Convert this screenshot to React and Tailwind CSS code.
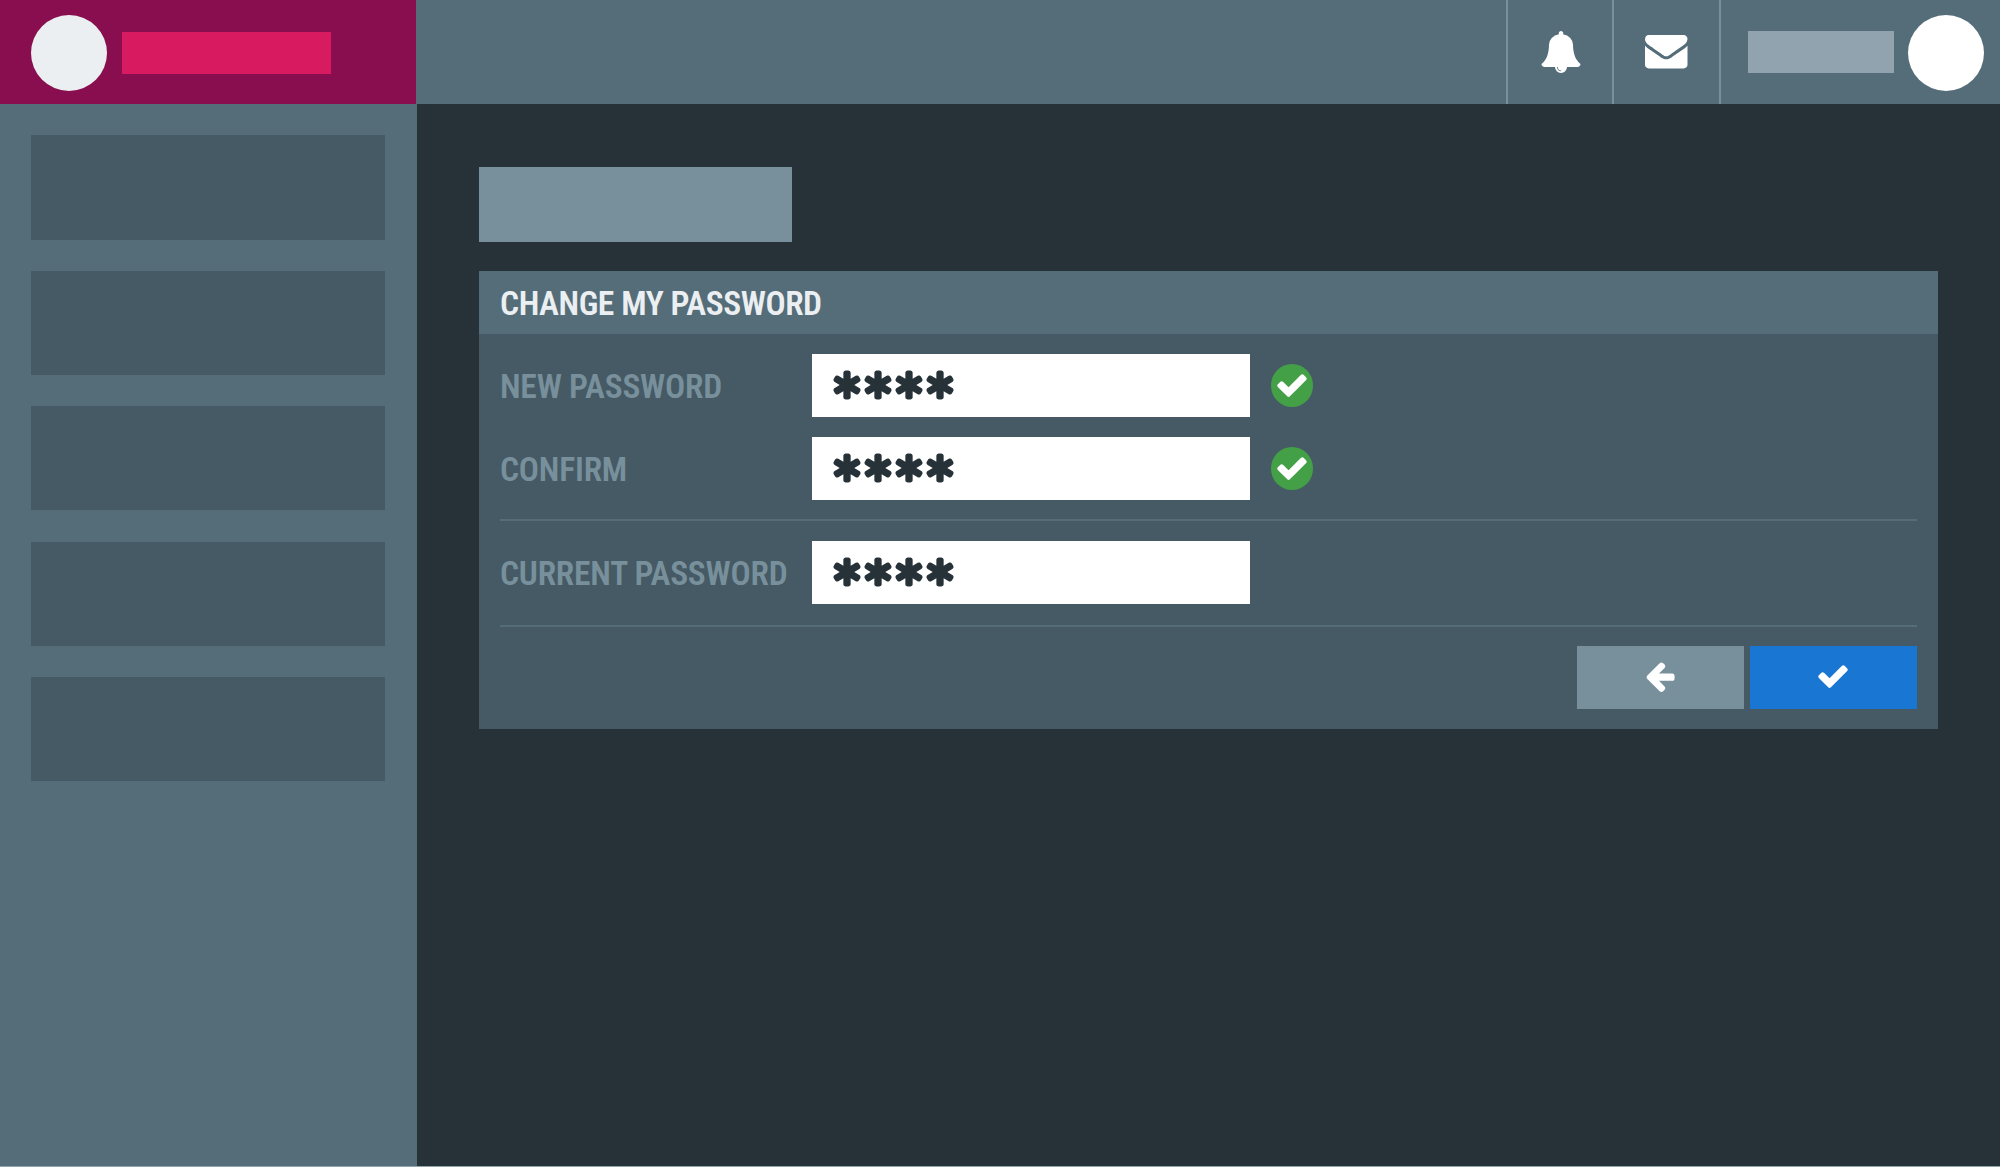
const ICONS = {
  check:
    'M1671 566q0 40-28 68l-724 724-136 136q-28 28-68 28t-68-28l-136-136-362-362q-28-28-28-68t28-68l136-136q28-28 68-28t68 28l294 295 656-657q28-28 68-28t68 28l136 136q28 28 28 68z',
  back:
    'M1664 896v128q0 53-32.5 90.5t-84.5 37.5h-704l293 294q38 36 38 90t-38 90l-75 76q-37 37-90 37-52 0-91-37l-651-652q-37-37-37-90 0-52 37-91l651-650q38-38 91-38 52 0 90 38l75 74q38 38 38 91t-38 91l-293 293h704q52 0 84.5 37.5t32.5 90.5z',
  asterisk:
    'M1546 1050q46 26 59.5 77.5t-12.5 97.5l-64 110q-26 46-77.5 59.5t-97.5-12.5l-266-153v307q0 52-38 90t-90 38h-128q-52 0-90-38t-38-90v-307l-266 153q-46 26-97.5 12.5t-77.5-59.5l-64-110q-26-46-12.5-97.5t59.5-77.5l266-154-266-154q-46-26-59.5-77.5t12.5-97.5l64-110q26-46 77.5-59.5t97.5 12.5l266 153v-307q0-52 38-90t90-38h128q52 0 90 38t38 90v307l266-153q46-26 97.5-12.5t77.5 59.5l64 110q26 46 12.5 97.5t-59.5 77.5l-266 154z',
  bell:
    'M912 1696q0-16-16-16-59 0-101.5-42.5t-42.5-101.5q0-16-16-16t-16 16q0 73 51.5 124.5t124.5 51.5q16 0 16-16zm816-288q0 52-38 90t-90 38h-448q0 106-75 181t-181 75-181-75-75-181h-448q-52 0-90-38t-38-90q50-42 91-88t85-119.5 74.5-158.5 50-206 19.5-260q0-152 117-282.5t307-158.5q-8-19-8-39 0-40 28-68t68-28 68 28 28 68q0 20-8 39 190 28 307 158.5t117 282.5q0 139 19.5 260t50 206 74.5 158.5 85 119.5 91 88z',
  envelope:
    'M1792 710v794q0 66-47 113t-113 47h-1472q-66 0-113-47t-47-113v-794q44 49 101 87 362 246 497 345 57 42 92.5 65.5t94.5 48 110 24.5h2q51 0 110-24.5t94.5-48 92.5-65.5q170-123 498-345 57-39 100-87zm0-294q0 79-49 151t-122 123q-376 261-468 325-10 7-42.5 31t-54 38.5-52 32.5-57.5 27-50 9h-2q-23 0-50-9t-57.5-27-52-32.5-54-38.5-42.5-31q-91-64-262-182.5t-205-142.5q-62-42-117-115.5t-55-136.5q0-78 41.5-130t118.5-52h1472q65 0 112.5 47t47.5 113z',
};

function Icon({ name, className }) {
  return (
    <svg viewBox="0 0 1792 1792" fill="currentColor" className={`shrink-0 overflow-visible ${className}`}>
      <path d={ICONS[name]} />
    </svg>
  );
}

function Caption({ children, className }) {
  return (
    <span className={`block pt-[2px] text-[33.5px] leading-none font-semibold whitespace-nowrap [font-stretch:75%] ${className}`}>
      {children}
    </span>
  );
}

function Field({ label, valid, className = '' }) {
  return (
    <div className={`flex h-[63px] items-center ${className}`}>
      <div className="w-[312px] shrink-0">
        <Caption className="tracking-[-0.22px] text-[#78909c]">{label}</Caption>
      </div>
      <div className="flex h-full w-[438px] shrink-0 items-center bg-white pl-[17.5px] text-[#263238]">
        {[0, 1, 2, 3].map((i) => (
          <span key={i} className="flex w-[31px]">
            <Icon name="asterisk" className="size-[34px]" />
          </span>
        ))}
      </div>
      {valid && (
        <div className="ml-[20.5px] flex size-[42.4px] items-center justify-center rounded-full bg-[#43a047] text-white">
          <Icon name="check" className="size-[34px]" />
        </div>
      )}
    </div>
  );
}

function Header() {
  return (
    <header className="flex h-[104px] shrink-0 bg-[#546d79]">
      <div className="flex w-[416px] items-center bg-[#880e4f] pt-[2px] pl-[31px]">
        <div className="size-[75.6px] rounded-full bg-[#eceff1]" />
        <div className="ml-[15.4px] h-[42px] w-[209px] bg-[#d81b60]" />
      </div>
      <div className="ml-auto flex text-white">
        <div className="flex w-[106px] items-center justify-center border-l-2 border-[#78909c] pl-px">
          <Icon name="bell" className="size-[42px]" />
        </div>
        <div className="flex w-[107px] items-center justify-center border-l-2 border-[#78909c] pb-[3px]">
          <Icon name="envelope" className="size-[42.5px]" />
        </div>
        <div className="flex w-[281px] items-center border-l-2 border-[#78909c] pl-[27px]">
          <div className="h-[42px] w-[146px] bg-[#90a3af]" />
          <div className="mt-[2px] ml-[14px] size-[75.6px] rounded-full bg-white" />
        </div>
      </div>
    </header>
  );
}

function Sidebar() {
  return (
    <nav className="flex w-[417px] shrink-0 flex-col gap-[31.25px] bg-[#546d79] px-[31px] pt-[31.4px]">
      {[0, 1, 2, 3, 4].map((i) => (
        <div key={i} className="h-[104.17px] w-[354px] shrink-0 bg-[#455a64]" />
      ))}
    </nav>
  );
}

function PasswordPanel() {
  return (
    <section className="mt-[29px] w-[1459px] bg-[#455a64]">
      <div className="flex h-[63px] items-center bg-[#546d79] pl-[21px]">
        <Caption className="tracking-[-0.44px] text-[#eceff1]">CHANGE MY PASSWORD</Caption>
      </div>
      <div className="px-[21px] pt-[20px] pb-[20px]">
        <Field label="NEW PASSWORD" valid />
        <Field label="CONFIRM" valid className="mt-[20px]" />
        <div className="mt-[19px] h-[2px] bg-[#546d79]" />
        <Field label="CURRENT PASSWORD" className="mt-[20px]" />
        <div className="mt-[21px] h-[2px] bg-[#546d79]" />
        <div className="mt-[19px] flex justify-end gap-[6px] text-white">
          <button className="flex h-[63px] w-[167px] items-center justify-center bg-[#78909c] pr-[2px] pb-[2px]">
            <Icon name="back" className="size-[34px]" />
          </button>
          <button className="flex h-[63px] w-[167px] items-center justify-center bg-[#1976d2] pr-[2px] pb-[2px]">
            <Icon name="check" className="size-[34px]" />
          </button>
        </div>
      </div>
    </section>
  );
}

export default function App() {
  return (
    <div className="flex h-[1167px] w-[2000px] flex-col overflow-hidden border-b border-[#90a4ae] bg-[#263238] font-['Roboto_Condensed','Roboto',sans-serif]">
      <Header />
      <div className="flex min-h-0 flex-1">
        <Sidebar />
        <main className="flex-1 pt-[62.6px] pl-[62px]">
          <div className="h-[75.4px] w-[313px] bg-[#78909c]" />
          <PasswordPanel />
        </main>
      </div>
    </div>
  );
}
